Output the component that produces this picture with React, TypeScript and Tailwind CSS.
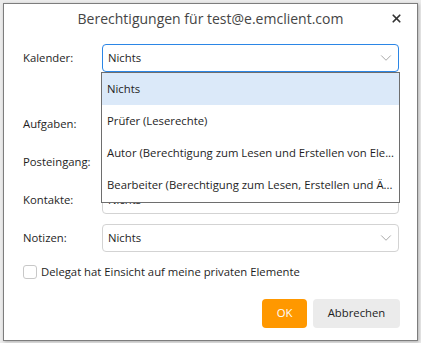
import { ChevronDown, X } from "lucide-react";

const font = { fontFamily: '"Open Sans", "Noto Sans", sans-serif' };

const rows = ["Aufgaben:", "Posteingang:", "Kontakte:", "Notizen:"];

const options = [
  "Nichts",
  "Prüfer (Leserechte)",
  "Autor (Berechtigung zum Lesen und Erstellen von Ele...",
  "Bearbeiter (Berechtigung zum Lesen, Erstellen und Ä...",
];

function Select({ focused = false }: { focused?: boolean }) {
  return (
    <div
      className={
        "flex h-[28px] w-[297px] items-center justify-between rounded-[4px] border bg-white pl-[5px] pr-[3px] text-[11.3px] text-[#1e1e1e] " +
        (focused ? "border-[#2b86e6]" : "border-[#d3d3d3]")
      }
    >
      <span>Nichts</span>
      <ChevronDown className="size-[18px] text-[#a8a8a8]" strokeWidth={1.3} />
    </div>
  );
}

export default function App() {
  return (
    <div className="h-[343px] w-[421px] bg-[#ebebeb] pl-[3px] pt-[3px]" style={font}>
      <div className="relative flex h-[338px] w-[415px] flex-col border border-[#7d7d7d] bg-white shadow-[1px_1px_3px_rgba(0,0,0,0.25)]">
        <div className="relative flex h-[28px] items-center justify-center whitespace-nowrap text-[14px] text-[#454545]">
          Berechtigungen für test@e.emclient.com
          <X className="absolute right-[14px] top-[8px] size-[13px] text-[#333]" strokeWidth={3.2} />
        </div>

        <div className="mt-[12px] flex flex-col whitespace-nowrap pl-[19px]">
          <div className="relative flex h-[28px] items-center">
            <span className="w-[79px] text-[11.3px] text-[#1e1e1e]">Kalender:</span>
            <Select focused />
            <div className="absolute left-[78px] top-[28px] z-10 w-[299px] border border-[#6e6e6e] bg-white text-[11.3px] text-[#1e1e1e]">
              {options.map((o, i) => (
                <div
                  key={o}
                  className={
                    "flex h-[32.25px] items-center overflow-hidden pl-[5px] " +
                    (i === 0 ? "bg-[#dbe9f9]" : "")
                  }
                >
                  {o}
                </div>
              ))}
            </div>
          </div>
          <div className="h-[28px]" />
          {rows.map((r) => (
            <div key={r} className="mt-[10px] flex h-[28px] items-center">
              <span className="w-[79px] text-[11.3px] text-[#1e1e1e]">{r}</span>
              <Select />
            </div>
          ))}

          <label className="mt-[13px] flex h-[14px] items-center gap-[4px] text-[11.3px] text-[#1e1e1e]">
            <span className="size-[14px] rounded-[3px] border border-[#c8c8c8] bg-white" />
            Delegat hat Einsicht auf meine privaten Elemente
          </label>

          <div className="mt-[20px] flex justify-end gap-[6px] pr-[17px]">
            <button className="h-[29px] w-[45px] rounded-[4px] bg-[#ff9800] text-[11.3px] text-white">
              OK
            </button>
            <button className="h-[29px] w-[87px] rounded-[4px] bg-[#ebebeb] text-[11.3px] text-[#1e1e1e]">
              Abbrechen
            </button>
          </div>
        </div>
      </div>
    </div>
  );
}
